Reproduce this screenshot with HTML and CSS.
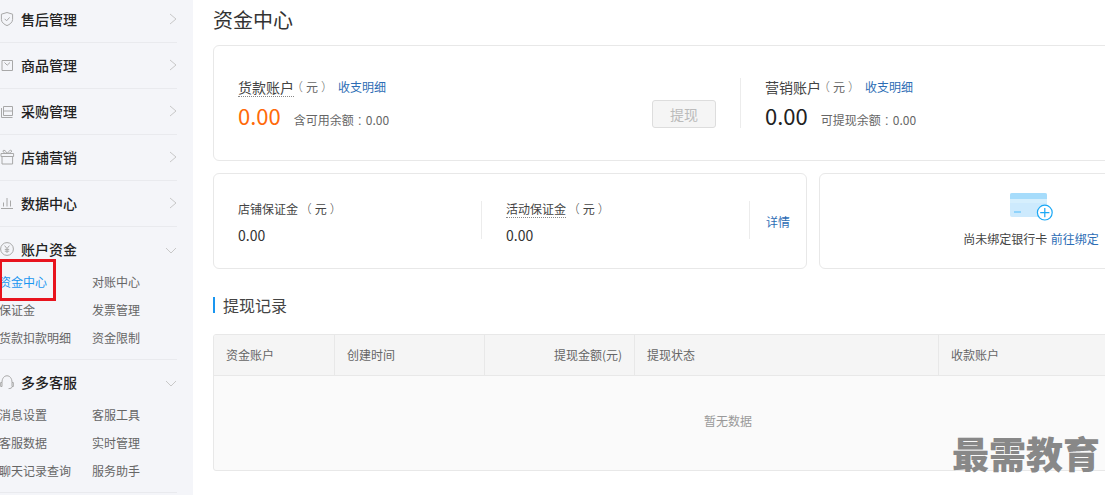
FILE: index.html
```html
<!DOCTYPE html>
<html lang="zh-CN">
<head>
<meta charset="utf-8">
<title>资金中心</title>
<link rel="stylesheet" href="styles.css">
</head>
<body>
<div class="page">
  <aside class="sidebar">
    <div class="menu">
      <div class="row">
        <svg class="ico" viewBox="0 0 21 20"><path d="M7 3.5 12.6 5.2V10.5C12.6 13.5 9.5 15.6 7 16.6 4.5 15.6 1.4 13.5 1.4 10.5V5.2Z"/><path d="M4.6 9.8 6.6 11.8 9.6 8.4"/></svg>
        <span class="row-title">售后管理</span>
        <svg class="chev" viewBox="0 0 8 12"><path d="M1 1 7 6 1 11"/></svg>
      </div>
      <div class="row">
        <svg class="ico" viewBox="0 0 21 20"><path d="M2 5.5H12.5V15.5H2Z"/><path d="M4.5 7.5 7.2 10.2 10 7.5"/></svg>
        <span class="row-title">商品管理</span>
        <svg class="chev" viewBox="0 0 8 12"><path d="M1 1 7 6 1 11"/></svg>
      </div>
      <div class="row">
        <svg class="ico" viewBox="0 0 21 20"><path d="M3.5 5.5H12.5V14.5H3.5Z"/><path d="M3.5 10H12.5"/><path d="M1.5 7V16.5H12.5"/></svg>
        <span class="row-title">采购管理</span>
        <svg class="chev" viewBox="0 0 8 12"><path d="M1 1 7 6 1 11"/></svg>
      </div>
      <div class="row">
        <svg class="ico" viewBox="0 0 21 20"><path d="M1 6.5H13.6V9.5H1Z"/><path d="M2 9.5V17H12.6V9.5"/><path d="M7.3 6.5C5.5 3 3.2 2.6 3 4 2.8 5.4 5 6.5 7.3 6.5 9.6 6.5 11.8 5.4 11.6 4 11.4 2.6 9.1 3 7.3 6.5Z"/></svg>
        <span class="row-title">店铺营销</span>
        <svg class="chev" viewBox="0 0 8 12"><path d="M1 1 7 6 1 11"/></svg>
      </div>
      <div class="row">
        <svg class="ico" viewBox="0 0 21 20"><path d="M1 15.5H13"/><path d="M3.5 9.5V13.5"/><path d="M7 5V13.5"/><path d="M10.5 7.5V13.5"/></svg>
        <span class="row-title">数据中心</span>
        <svg class="chev" viewBox="0 0 8 12"><path d="M1 1 7 6 1 11"/></svg>
      </div>
      <div class="group">
        <div class="group-head">
          <svg class="ico" viewBox="0 0 21 20"><circle cx="7" cy="10" r="6.4"/><path d="M4.6 6.6 7 9.6 9.4 6.6"/><path d="M7 9.6V14M4.8 10.4H9.2M4.8 12.2H9.2"/></svg>
          <span class="row-title">账户资金</span>
          <svg class="chev-down" viewBox="0 0 12 8"><path d="M1 1 6 6 11 1"/></svg>
        </div>
        <div class="subs">
          <a class="sub sub-active">资金中心</a><a class="sub">对账中心</a>
          <a class="sub">保证金</a><a class="sub">发票管理</a>
          <a class="sub">货款扣款明细</a><a class="sub">资金限制</a>
        </div>
      </div>
      <div class="group">
        <div class="group-head">
          <svg class="ico" viewBox="0 0 21 20"><path d="M2 10.5C2 6 4.4 3.8 7 3.8S12 6 12 10.5"/><path d="M.7 10.5H2V14.5H.7Z"/><path d="M12 10.5H13.3V14.5H12Z"/><path d="M12.4 14.5C12 16 10.4 16.6 8.6 16.6"/></svg>
          <span class="row-title">多多客服</span>
          <svg class="chev-down" viewBox="0 0 12 8"><path d="M1 1 6 6 11 1"/></svg>
        </div>
        <div class="subs">
          <a class="sub">消息设置</a><a class="sub">客服工具</a>
          <a class="sub">客服数据</a><a class="sub">实时管理</a>
          <a class="sub">聊天记录查询</a><a class="sub">服务助手</a>
        </div>
      </div>
    </div>
  </aside>

  <main class="main">
    <h1 class="page-title">资金中心</h1>

    <section class="card card-accounts">
      <div class="account account-first">
        <div class="account-info">
          <div class="label-row"><span class="dotted">货款账户</span><span class="unit"><span class="par">（</span>元<span class="par">）</span></span><a class="link link-near">收支明细</a></div>
          <div class="value-row"><span class="amount amount-orange">0.00</span><span class="note">含可用余额<span class="par">：</span>0.00</span></div>
        </div>
        <button class="btn-disabled" type="button">提现</button>
      </div>
      <div class="account account-second">
        <div class="account-info">
          <div class="label-row"><span>营销账户</span><span class="unit"><span class="par">（</span>元<span class="par">）</span></span><a class="link link-near">收支明细</a></div>
          <div class="value-row"><span class="amount">0.00</span><span class="note">可提现余额<span class="par">：</span>0.00</span></div>
        </div>
      </div>
    </section>

    <div class="card-line">
      <section class="card card-deposit">
        <div class="stat">
          <div class="stat-label"><span>店铺保证金</span> <span class="par">（</span>元<span class="par">）</span></div>
          <div class="stat-value">0.00</div>
        </div>
        <div class="stat stat-divided">
          <div class="stat-label"><span class="dotted">活动保证金</span> <span class="par">（</span>元<span class="par">）</span></div>
          <div class="stat-value">0.00</div>
        </div>
        <div class="stat-more"><a class="link">详情</a></div>
      </section>
      <section class="card card-bank">
        <svg class="bank-ico" viewBox="0 0 43 28">
          <rect class="bank-body" x="0" y="0" width="37" height="24" rx="2"/>
          <path class="bank-top" d="M0 6V2A2 2 0 0 1 2 0H35A2 2 0 0 1 37 2V6Z"/>
          <rect class="bank-stripe" x="0" y="6" width="37" height="4"/>
          <rect class="bank-dash" x="4" y="18" width="7" height="2"/>
          <circle class="bank-circle" cx="34.8" cy="19.6" r="7.4"/>
          <path class="bank-plus" d="M34.8 15V24.2M30.2 19.6H39.4"/>
        </svg>
        <div class="bank-text">尚未绑定银行卡 <a class="link">前往绑定</a></div>
      </section>
    </div>

    <h2 class="section-title">提现记录</h2>

    <div class="table-wrap">
      <table class="table">
        <thead>
          <tr>
            <th class="col-a">资金账户</th>
            <th class="col-b">创建时间</th>
            <th class="col-c num">提现金额(元)</th>
            <th class="col-d">提现状态</th>
            <th class="col-e">收款账户</th>
          </tr>
        </thead>
        <tbody>
          <tr><td class="empty" colspan="5">暂无数据</td></tr>
        </tbody>
      </table>
    </div>
  </main>

  <div class="annotation"></div>
  <div class="watermark">最需教育</div>
</div>
</body>
</html>
```

FILE: styles.css
```css
* { box-sizing: border-box; }
html, body { margin: 0; padding: 0; height: 100%; overflow: hidden; background: #fff; }
body { font-family: "Noto Sans CJK SC", "Noto Sans", sans-serif; font-size: 12px; color: #333; }
a { color: inherit; text-decoration: none; }

.page { position: relative; display: flex; width: 1105px; height: 495px; overflow: hidden; }

/* sidebar */
.sidebar { flex: 0 0 193px; height: 495px; background: #f4f5f9; overflow: hidden; }
.menu { width: 177px; margin-top: -3px; }
.row { display: flex; align-items: center; height: 46px; padding-bottom: 2px; border-bottom: 1px solid #e9eaee; }
.ico { flex: 0 0 21px; width: 21px; height: 20px; fill: none; stroke: #a8a8a8; stroke-width: 1; }
.row-title { flex: 1; font-size: 14px; line-height: 20px; font-weight: 500; color: #222; }
.chev { flex: 0 0 8px; width: 8px; height: 12px; fill: none; stroke: #c8c8c8; stroke-width: 1; }
.chev-down { flex: 0 0 12px; width: 12px; height: 8px; margin-top: 4px; fill: none; stroke: #c8c8c8; stroke-width: 1; }
.group { height: 133px; border-bottom: 1px solid #e9eaee; }
.group-head { display: flex; align-items: center; height: 41px; padding-top: 3px; }
.subs { display: grid; grid-template-columns: 92px 85px; grid-auto-rows: 28px; margin-left: -1px; }
.sub { font-size: 12px; line-height: 28px; color: #666; white-space: nowrap; }
.sub:nth-child(even) { margin-left: 1px; }
.sub-active { color: #1a96f0; }

/* main */
.main { flex: 0 0 1050px; padding-left: 20px; }
.page-title { margin: 0 0 5px; height: 40px; font-size: 20px; line-height: 40px; font-weight: 400; color: #333; }
.card { background: #fff; border: 1px solid #e8e8e8; border-radius: 6px; }
.card-accounts { display: flex; align-items: center; width: 1030px; height: 116px; padding-left: 24px; }
.account { display: flex; height: 50px; }
.account-first { flex: 0 0 478px; justify-content: space-between; align-items: flex-end; }
.account-second { margin-left: 24px; padding-left: 24px; border-left: 1px solid #ececec; }
.account-info { align-self: flex-start; }
.label-row { display: flex; align-items: center; height: 20px; margin-top: -1px; font-size: 14px; line-height: 20px; color: #444; }
.unit { font-size: 12px; color: #666; }
.par { display: inline-block; width: 1em; text-align: center; font-feature-settings: "halt"; font-weight: 300; }
.link { font-size: 12px; color: #2d6db5; }
.link-near { margin-left: 8px; }
.dotted { border-bottom: 1px dotted #888; }
.label-row .dotted { line-height: 18px; margin-top: 1px; }
.value-row { display: flex; align-items: flex-start; height: 30px; padding-top: 4px; }
.amount { font-size: 22px; line-height: 28px; color: #222; }
.amount-orange { color: #ff6a0a; }
.note { margin: 10px 0 0 13px; font-size: 12px; line-height: 18px; color: #666; }
.btn-disabled { width: 64px; height: 28px; padding: 0; font: inherit; font-size: 14px; color: #bbb; background: #f5f5f5; border: 1px solid #ddd; border-radius: 3px; }

.card-line { display: flex; gap: 12px; margin-top: 12px; width: 1030px; }
.card-deposit { display: flex; align-items: center; flex: 0 0 594px; height: 96px; padding-left: 24px; }
.stat { flex: 0 0 243px; height: 38px; margin-top: -2px; }
.stat-divided { flex: 0 0 268px; padding-left: 24px; border-left: 1px solid #ececec; }
.stat-label { height: 16px; font-size: 12px; line-height: 16px; color: #444; word-spacing: 2px; }
.stat-label .dotted { display: inline-block; line-height: 16px; }
.stat-value { margin-top: 8px; font-size: 14px; line-height: 20px; color: #333; }
.stat-more { display: flex; align-items: center; height: 38px; margin-top: -2px; padding: 2px 0 0 16px; border-left: 1px solid #ececec; }
.card-bank { display: flex; flex-direction: column; align-items: center; flex: 1; height: 96px; padding-top: 19px; }
.bank-ico { display: block; width: 43px; height: 28px; }
.bank-body { fill: #cdeafd; }
.bank-top { fill: #a6dcfb; }
.bank-stripe { fill: #d6effd; }
.bank-dash { fill: #8fd3fb; }
.bank-circle { fill: #fff; stroke: #1ba8f5; stroke-width: 1.2; }
.bank-plus { fill: none; stroke: #1ba8f5; stroke-width: 1.2; }
.bank-text { margin-top: 10px; font-size: 12px; line-height: 16px; color: #444; white-space: nowrap; word-spacing: 1px; }

.section-title { margin: 28px 0 21px; padding-left: 8px; height: 16px; border-left: 2px solid #1a96f0; font-size: 16px; line-height: 16px; font-weight: 400; color: #444; }

.table-wrap { width: 1030px; height: 137px; background: #fafafa; border: 1px solid #e8e8e8; border-radius: 3px; overflow: hidden; }
.table { width: 100%; border-collapse: separate; border-spacing: 0; table-layout: fixed; }
.table th { height: 41px; padding: 0 12px 2px; font-size: 12px; font-weight: 400; color: #666; text-align: left; background: #f5f5f5; border-bottom: 1px solid #e8e8e8; border-right: 1px solid #e8e8e8; white-space: nowrap; }
.table th:last-child { border-right: 0; }
.col-a { width: 121px; }
.col-b { width: 150px; }
.col-c { width: 150px; }
.col-d { width: 304px; }
.table th.num { text-align: right; }
.empty { height: 94px; text-align: center; font-size: 12px; color: #999; padding: 0 0 5px; }

/* overlays */
.annotation { position: absolute; left: -1px; top: 259px; width: 57px; height: 42px; border: 3px solid #e8141e; }
.watermark { position: absolute; left: 952px; top: 428px; font-size: 37px; line-height: 50px; font-weight: 900; color: #888; white-space: nowrap; }
```
